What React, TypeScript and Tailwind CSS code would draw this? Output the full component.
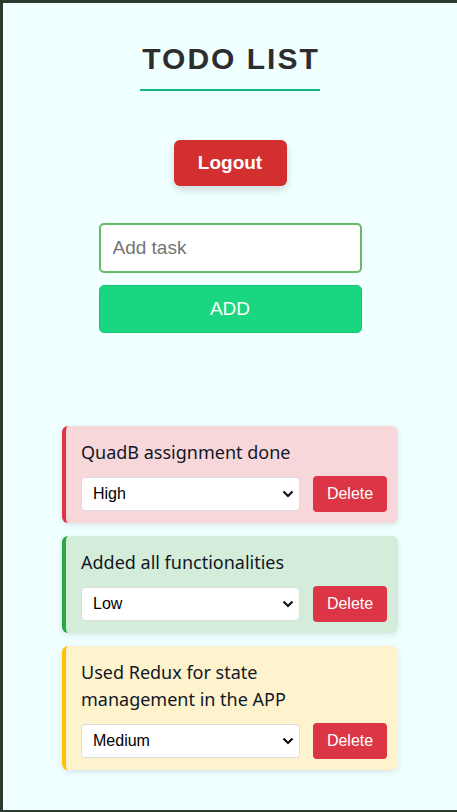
import { ChangeEvent, useState } from "react";

type Priority = "High" | "Medium" | "Low";

interface Todo {
  id: number;
  text: string;
  priority: Priority;
}

const priorityStyles: Record<Priority, string> = {
  High: "bg-[#f8d7da] border-[#dc3545]",
  Medium: "bg-[#fff3cd] border-[#ffc107]",
  Low: "bg-[#d4edda] border-[#28a745]",
};

const initialTodos: Todo[] = [
  { id: 1, text: "QuadB assignment done", priority: "High" },
  { id: 2, text: "Added all functionalities", priority: "Low" },
  { id: 3, text: "Used Redux for state management in the APP", priority: "Medium" },
];

function TodoItem({
  todo,
  onPriority,
  onDelete,
}: {
  todo: Todo;
  onPriority: (p: Priority) => void;
  onDelete: () => void;
}) {
  return (
    <div
      className={`rounded-[6px] border-l-4 pl-[15px] pr-[11px] pt-[13px] pb-[11px] shadow-[0_2px_6px_rgba(0,0,0,0.1)] ${priorityStyles[todo.priority]}`}
    >
      <p className="max-w-[220px] text-[18px] leading-[27px] text-[#111827] font-['Noto_Sans',sans-serif]">
        {todo.text}
      </p>
      <div className="mt-[10px] flex items-center gap-[13px]">
        <div className="relative w-[219px]">
          <select
            value={todo.priority}
            onChange={(e: ChangeEvent<HTMLSelectElement>) => onPriority(e.target.value as Priority)}
            className="h-[34px] w-full appearance-none rounded-[4px] border border-[#dcdcdc] bg-white pl-[11px] text-[16px] text-black outline-none font-['Liberation_Sans',Arial,sans-serif]"
          >
            <option>High</option>
            <option>Medium</option>
            <option>Low</option>
          </select>
          <svg
            className="pointer-events-none absolute right-[6px] top-1/2 -translate-y-1/2"
            width="12"
            height="8"
            viewBox="0 0 12 8"
          >
            <path d="M1.5 1.5l4.5 4.5 4.5-4.5" fill="none" stroke="#111" strokeWidth="2.2" />
          </svg>
        </div>
        <button
          onClick={onDelete}
          className="h-[36px] w-[74px] rounded-[4px] bg-[#dc3545] text-[16px] text-white font-['Liberation_Sans',Arial,sans-serif]"
        >
          Delete
        </button>
      </div>
    </div>
  );
}

export default function App() {
  const [todos, setTodos] = useState<Todo[]>(initialTodos);
  const [task, setTask] = useState("");

  const addTodo = () => {
    if (!task.trim()) return;
    setTodos([...todos, { id: Date.now(), text: task.trim(), priority: "Medium" }]);
    setTask("");
  };

  return (
    <div className="flex min-h-[812px] flex-col items-center border-t-[3px] border-l-[3px] border-b-[2px] border-[#2d3b2e] bg-[#f0ffff] font-['Liberation_Sans',Arial,sans-serif]">
      <h1 className="mt-[39px] border-b-2 border-[#10b981] pb-[13px] pl-[2px] text-[30px] leading-[34px] font-bold tracking-[2px] text-[#2d2d2d]">
        TODO LIST
      </h1>

      <button className="mt-[49px] h-[46px] w-[113px] rounded-[6px] bg-[#d32f2f] text-[19px] font-bold text-white shadow-[0_4px_8px_rgba(0,0,0,0.15)]">
        Logout
      </button>

      <input
        value={task}
        onChange={(e) => setTask(e.target.value)}
        placeholder="Add task"
        className="mt-[37px] h-[50px] w-[263px] rounded-[5px] border-2 border-[#66bb6a] bg-white px-[12px] text-[19px] text-black outline-none placeholder:text-[#757575]"
      />
      <button
        onClick={addTodo}
        className="mt-[12px] h-[48px] w-[263px] rounded-[5px] border border-[#17c474] bg-[#1ad680] text-[19px] text-white"
      >
        ADD
      </button>

      <div className="mt-[93px] mb-[40px] flex w-[336px] flex-col gap-[13px]">
        {todos.map((t) => (
          <TodoItem
            key={t.id}
            todo={t}
            onPriority={(p) => setTodos(todos.map((x) => (x.id === t.id ? { ...x, priority: p } : x)))}
            onDelete={() => setTodos(todos.filter((x) => x.id !== t.id))}
          />
        ))}
      </div>
    </div>
  );
}
